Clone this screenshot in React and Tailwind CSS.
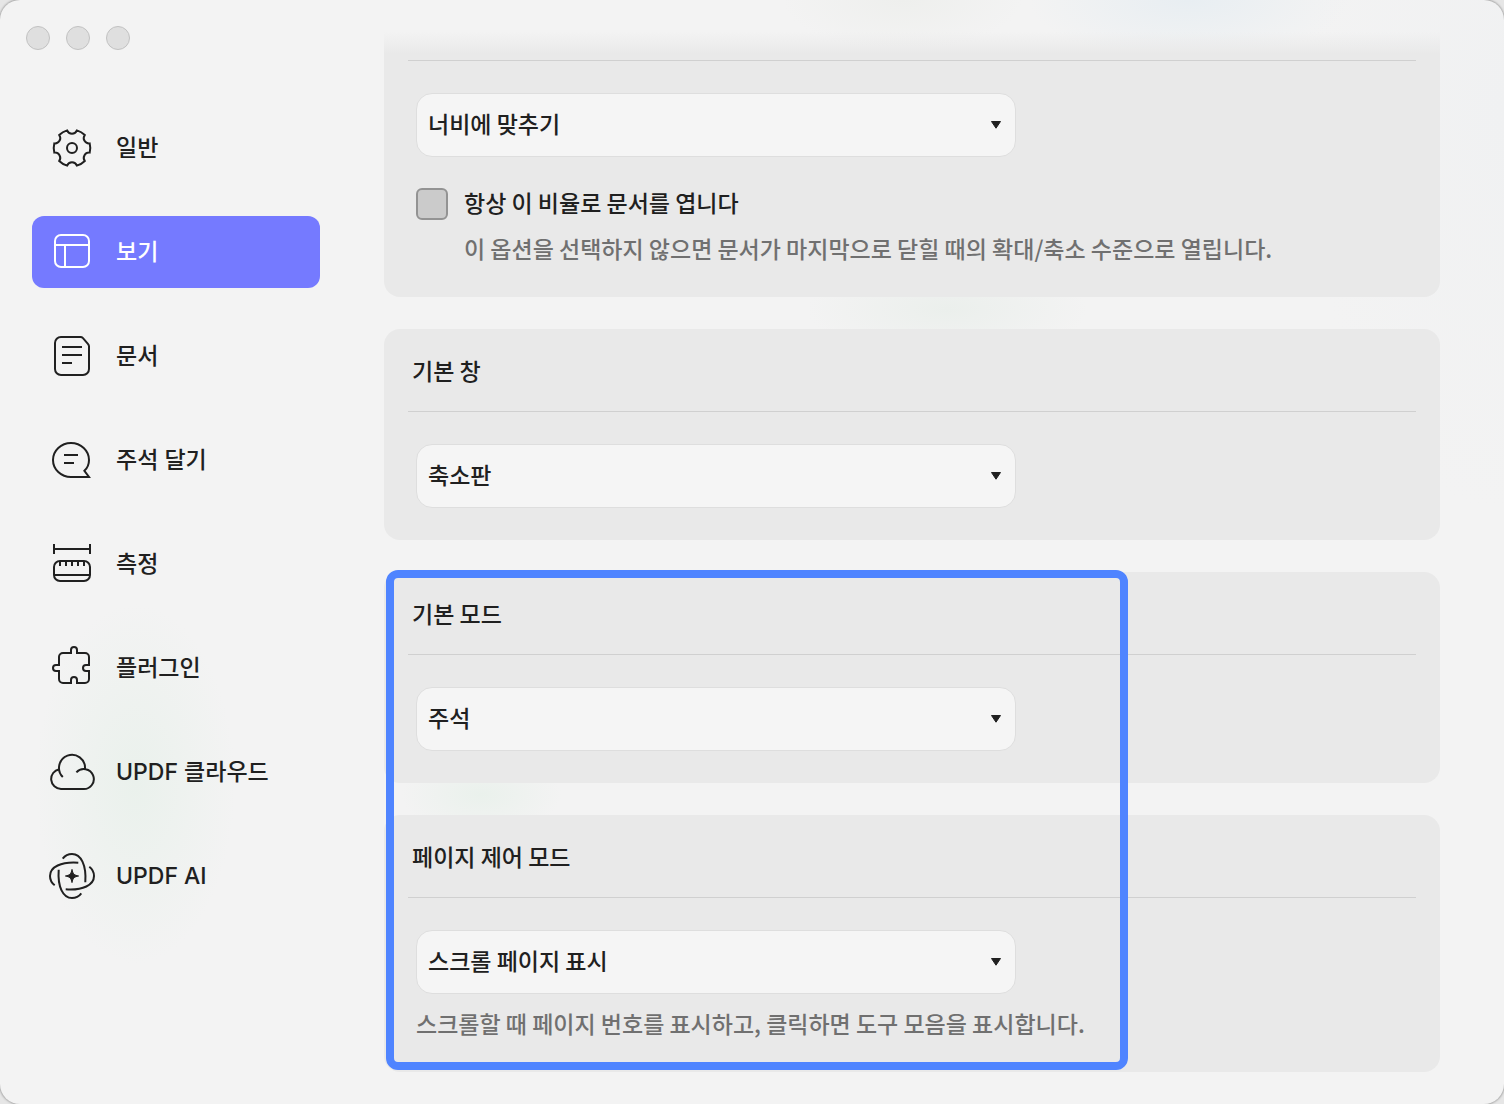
import React, { useState } from "react";

const GearIcon = () => (
  <>
    <path d="M41.7 28.6A5.3 5.3 0 0 0 36.8 37A18.3 18.3 0 0 1 28.9 41.6A5.3 5.3 0 0 0 19.1 41.6A18.3 18.3 0 0 1 11.2 37A5.3 5.3 0 0 0 6.3 28.6A18.3 18.3 0 0 1 6.3 19.4A5.3 5.3 0 0 0 11.2 11A18.3 18.3 0 0 1 19.1 6.4A5.3 5.3 0 0 0 28.9 6.4A18.3 18.3 0 0 1 36.8 11A5.3 5.3 0 0 0 41.7 19.4A18.3 18.3 0 0 1 41.7 28.6Z" />
    <circle cx="24" cy="24" r="5" />
  </>
);

const LayoutIcon = () => (
  <>
    <rect x="7" y="7" width="34" height="32" rx="6" />
    <path d="M7 17H41M17 17V39" />
  </>
);

const DocumentIcon = () => (
  <>
    <path d="M13 5H32.5C33.5 5 34.3 5.4 35 6.1L39.9 11.8C40.6 12.6 41 13.4 41 14.4V37A6 6 0 0 1 35 43H13A6 6 0 0 1 7 37V11A6 6 0 0 1 13 5Z" />
    <path d="M14 15H34M14 23H34M14 31H24" />
  </>
);

const CommentIcon = () => (
  <>
    <path d="M23 41H41L36.4 34.8C39.4 32 41 28.5 41 24A18 17 0 1 0 23 41Z" />
    <path d="M16 19H30M16 27H26" />
  </>
);

const RulerIcon = () => (
  <>
    <path d="M6 9H42M6 4V14M42 4V14" />
    <rect x="6" y="21" width="36" height="20" rx="6" />
    <path d="M6 35H42M12 21V26M18 21V26M24 21V26M30 21V26M36 21V26" />
  </>
);

const PluginIcon = () => (
  <path d="M15 9H23V6A3 3 0 0 1 29 6V9H37A4 4 0 0 1 41 13V21H38A3 3 0 0 0 38 27H41V35A4 4 0 0 1 37 39H29V36A3 3 0 0 0 23 36V39H15A4 4 0 0 1 11 35V27H8A3 3 0 0 1 8 21H11V13A4 4 0 0 1 15 9Z" />
);

const CloudIcon = () => (
  <path d="M11.2 21.2A10 10 0 0 0 13 41H35A10 10 0 1 0 28.4 24.3M37 20.6A13 13 0 1 0 14.8 29" />
);

const AiIcon = () => (
  <>
    {[0, 90, 180, 270].map((angle) => (
      <path
        key={angle}
        d="M14.7 6.7C17.5 3 20.5 2 24 2C33 2 38.5 13 37.3 30.3"
        transform={`rotate(${angle} 24 24)`}
      />
    ))}
    <path
      d="M24 17.4C24.8 21.8 26.2 23.2 30.6 24C26.2 24.8 24.8 26.2 24 30.6C23.2 26.2 21.8 24.8 17.4 24C21.8 23.2 23.2 21.8 24 17.4Z"
      fill="currentColor"
      strokeWidth="1"
    />
  </>
);

const menuItems = [
  { id: "general", label: "일반", Icon: GearIcon },
  { id: "view", label: "보기", Icon: LayoutIcon },
  { id: "document", label: "문서", Icon: DocumentIcon },
  { id: "comment", label: "주석 달기", Icon: CommentIcon },
  { id: "measure", label: "측정", Icon: RulerIcon },
  { id: "plugin", label: "플러그인", Icon: PluginIcon },
  { id: "cloud", label: "UPDF 클라우드", Icon: CloudIcon },
  { id: "ai", label: "UPDF AI", Icon: AiIcon },
];

const Sidebar = ({ active, onSelect }) => (
  <aside className="w-[352px] shrink-0 px-8 pb-8">
    <div className="-ml-1.5 flex gap-4 pt-[26px]">
      {["닫기", "최소화", "확대"].map((name) => (
        <button
          key={name}
          type="button"
          aria-label={name}
          className="size-6 rounded-full border border-[#c2c2c2] bg-[#dfdfdf]"
        />
      ))}
    </div>

    <nav className="mt-[62px] flex flex-col gap-8">
      {menuItems.map(({ id, label, Icon }) => (
        <button
          key={id}
          type="button"
          onClick={() => onSelect(id)}
          className={`flex h-[72px] items-center gap-5 rounded-xl px-4 text-left font-['Inter','Noto_Sans_CJK_KR',sans-serif] ${
            active === id ? "bg-[#757aff] text-white" : "text-[#202020]"
          }`}
        >
          <svg
            viewBox="0 0 48 48"
            fill="none"
            stroke="currentColor"
            strokeWidth="2"
            aria-hidden="true"
            className="size-12 shrink-0"
          >
            <Icon />
          </svg>
          {label}
        </button>
      ))}
    </nav>
  </aside>
);

const SelectBox = ({ label, options }) => (
  <div className="grid max-w-[600px] items-center">
    <select
      aria-label={label}
      className="col-start-1 row-start-1 h-16 w-full appearance-none rounded-2xl border border-[#dedede] bg-[#f5f5f5] px-[11px] pb-1 text-[#202020]"
    >
      {options.map((option) => (
        <option key={option}>{option}</option>
      ))}
    </select>
    <svg
      viewBox="0 0 12 8"
      aria-hidden="true"
      className="pointer-events-none col-start-1 row-start-1 mr-3.5 h-2 w-3 justify-self-end"
    >
      <path
        d="M1.5 .5H10.5L6 7.2Z"
        fill="#202020"
        stroke="#202020"
        strokeLinejoin="round"
      />
    </svg>
  </div>
);

const Card = ({ title, children }) => (
  <section className="rounded-2xl bg-[#e9e9e9] px-6 pb-8">
    <h2 className="flex h-[82px] items-center px-1">{title}</h2>
    <hr className="border-[#d0d0d0]" />
    <div className="px-2 pt-8">{children}</div>
  </section>
);

const App = () => {
  const [active, setActive] = useState("view");
  const [keepZoom, setKeepZoom] = useState(false);

  return (
    <div className="min-h-screen overflow-hidden bg-[#e6e6e6] font-['Noto_Sans_CJK_KR',sans-serif] text-[23px] leading-[30px] font-medium text-[#202020]">
      <div className="flex min-h-screen rounded-[20px] bg-[#f3f3f3] bg-[radial-gradient(ellipse_100px_180px_at_9%_71%,#eaf1ec,transparent),radial-gradient(ellipse_160px_60px_at_79%_0%,#e8eef2,transparent),radial-gradient(ellipse_120px_50px_at_60%_0%,#eeefed,transparent),radial-gradient(ellipse_140px_50px_at_63%_28%,#ebefec,transparent),radial-gradient(ellipse_80px_40px_at_32%_72%,#eaf1ec,transparent),radial-gradient(ellipse_200px_400px_at_100%_10%,#f0f1f2,transparent)] shadow-[0_0_2px_1px_#a8a8a8]">
        <Sidebar active={active} onSelect={setActive} />

        <main className="min-w-0 flex-1 py-8 pr-16 pl-8">
          <div className="flex flex-col gap-8">
            {/* Scrolled card, its top fades under the title bar */}
            <section className="rounded-b-2xl bg-[linear-gradient(to_bottom,transparent,#e9e9e9_22px)] px-6 pt-7 pb-8">
              <hr className="border-[#d0d0d0]" />
              <div className="px-2 pt-8">
                <SelectBox
                  label="기본 확대/축소"
                  options={["너비에 맞추기", "페이지에 맞추기", "실제 크기"]}
                />
                <label className="mt-[31px] flex items-center gap-4">
                  <input
                    type="checkbox"
                    checked={keepZoom}
                    onChange={(e) => setKeepZoom(e.target.checked)}
                    className="size-8 shrink-0 appearance-none rounded-md border-2 border-[#939393] bg-[#cbcbcb] checked:bg-[#757aff]"
                  />
                  <span className="pb-1 leading-[26px]">
                    항상 이 비율로 문서를 엽니다
                  </span>
                </label>
                <p className="mt-[15px] pb-1 pl-12 leading-[26px] text-[#707070]">
                  이 옵션을 선택하지 않으면 문서가 마지막으로 닫힐 때의 확대/축소
                  수준으로 열립니다.
                </p>
              </div>
            </section>

            <Card title="기본 창">
              <SelectBox
                label="기본 창"
                options={["축소판", "책갈피", "없음"]}
              />
            </Card>

            <div className="relative flex flex-col gap-8">
              <Card title="기본 모드">
                <SelectBox label="기본 모드" options={["주석", "읽기", "편집"]} />
              </Card>

              <Card title="페이지 제어 모드">
                <SelectBox
                  label="페이지 제어 모드"
                  options={["스크롤 페이지 표시", "항상 표시", "숨기기"]}
                />
                <p className="mt-4 pb-1 leading-[26px] text-[#707070]">
                  스크롤할 때 페이지 번호를 표시하고, 클릭하면 도구 모음을
                  표시합니다.
                </p>
              </Card>

              {/* Highlight frame */}
              <div className="pointer-events-none absolute -top-0.5 bottom-0.5 left-0.5 w-[742px] rounded-xl border-8 border-[#4f84ff]" />
            </div>
          </div>
        </main>
      </div>
    </div>
  );
};

export default App;
